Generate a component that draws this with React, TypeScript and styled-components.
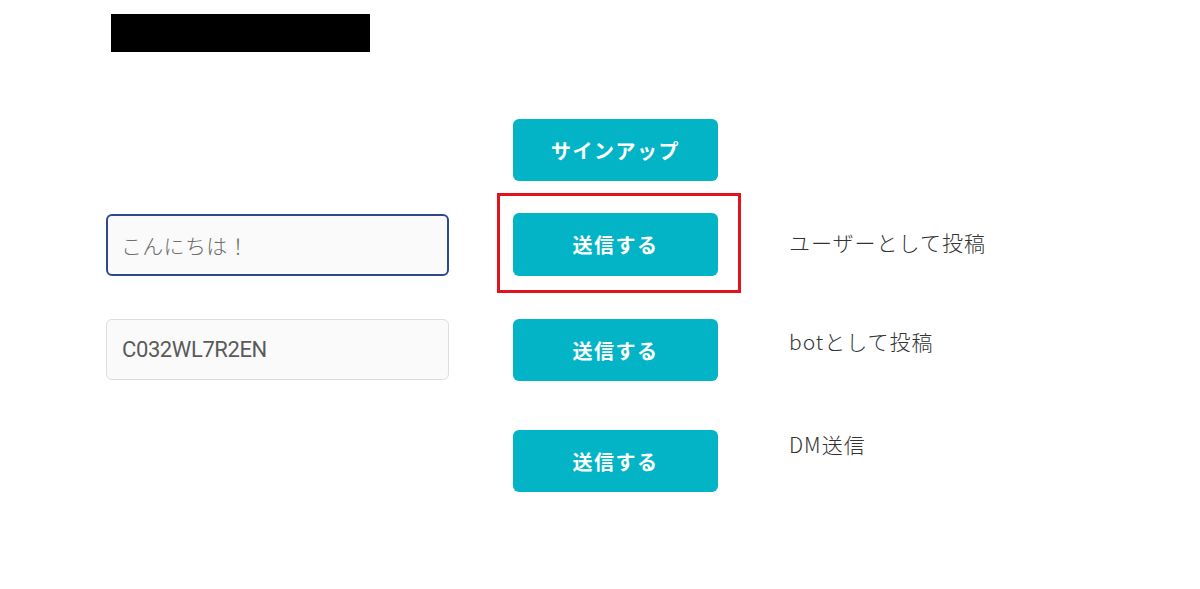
import styled, { createGlobalStyle } from "styled-components";

const GlobalStyle = createGlobalStyle`
    body {
        margin: 0;
        background: #ffffff;
        font-family: "Noto Sans CJK JP", "Noto Sans", sans-serif;
    }
`

type RowProps = {
    gap: number
    input?: React.ReactNode
    label?: string
    labelOffset?: number
    buttonText: string
    highlighted?: boolean
}

function FormRow({ gap, input, label, labelOffset = 0, buttonText, highlighted = false }: RowProps) {
    return (
        <RowStyled $gap={gap}>
            <div className="input-cell">{input}</div>
            <ButtonCell $highlighted={highlighted}>
                <ActionButton type="button">{buttonText}</ActionButton>
            </ButtonCell>
            {label && <Label $offset={labelOffset}>{label}</Label>}
        </RowStyled>
    )
}

export default function App() {
    return (
        <>
            <GlobalStyle />
            <Page>
                <Masked />
                <FormRow gap={67} buttonText="サインアップ" />
                <FormRow
                    gap={32}
                    highlighted
                    buttonText="送信する"
                    label="ユーザーとして投稿"
                    labelOffset={14}
                    input={<TextInput $focused placeholder="こんにちは！" />}
                />
                <FormRow
                    gap={44}
                    buttonText="送信する"
                    label="botとして投稿"
                    labelOffset={7}
                    input={<TextInput $mono defaultValue="C032WL7R2EN" />}
                />
                <FormRow
                    gap={49}
                    buttonText="送信する"
                    label="DM送信"
                    labelOffset={-1}
                />
            </Page>
        </>
    )
}

const Page = styled.div`
    width: 1200px;
    height: 589px;
    display: flex;
    flex-direction: column;
`

const Masked = styled.div`
    margin: 14px 0 0 111px;
    width: 259px;
    height: 38px;
    background: #000000;
`

const RowStyled = styled.div<{ $gap: number }>`
    margin-top: ${({ $gap }) => $gap}px;
    margin-left: 106px;
    display: grid;
    grid-template-columns: 343px 205px 1fr;
    column-gap: 64px;
    height: 62px;

    .input-cell {
        display: flex;
    }

    & > :nth-child(3) {
        margin-left: 7px;
    }
`

const ButtonCell = styled.div<{ $highlighted: boolean }>`
    position: relative;
    display: flex;

    &::after {
        content: "";
        display: ${({ $highlighted }) => ($highlighted ? "block" : "none")};
        position: absolute;
        top: -20px;
        right: -23px;
        bottom: -17px;
        left: -16px;
        border: 3px solid #e3131d;
        pointer-events: none;
    }
`

const ActionButton = styled.button`
    flex: 1;
    border: none;
    border-radius: 6px;
    background: #03b4c6;
    color: #ffffff;
    font-family: "Noto Sans CJK JP", sans-serif;
    font-size: 20px;
    font-weight: 700;
    letter-spacing: 1.5px;
    cursor: pointer;
`

const TextInput = styled.input<{ $focused?: boolean, $mono?: boolean }>`
    box-sizing: border-box;
    width: 100%;
    height: ${({ $focused }) => ($focused ? "62px" : "61px")};
    margin-top: ${({ $focused }) => ($focused ? "1px" : "0")};
    border: ${({ $focused }) => ($focused ? "2px solid #2e4890" : "1px solid #dddddd")};
    border-radius: 6px;
    background: #fafafa;
    outline: none;
    font-family: ${({ $mono }) => ($mono ? "Roboto, sans-serif" : "\"Noto Sans CJK JP\", sans-serif")};
    font-size: ${({ $mono }) => ($mono ? "22px" : "21px")};
    font-weight: ${({ $mono }) => ($mono ? 400 : 300)};
    letter-spacing: ${({ $mono }) => ($mono ? "-0.4px" : "0.3px")};
    color: ${({ $mono }) => ($mono ? "#5a5a5a" : "#555555")};
    padding: 0 14px 0 ${({ $mono }) => ($mono ? "15px" : "13px")};

    &::placeholder {
        color: #6f6f6f;
    }
`

const Label = styled.div<{ $offset: number }>`
    margin-top: ${({ $offset }) => $offset}px;
    font-family: "Noto Sans CJK JP", sans-serif;
    font-size: 21px;
    font-weight: 300;
    line-height: 30px;
    color: #333333;
    letter-spacing: 1px;
`
